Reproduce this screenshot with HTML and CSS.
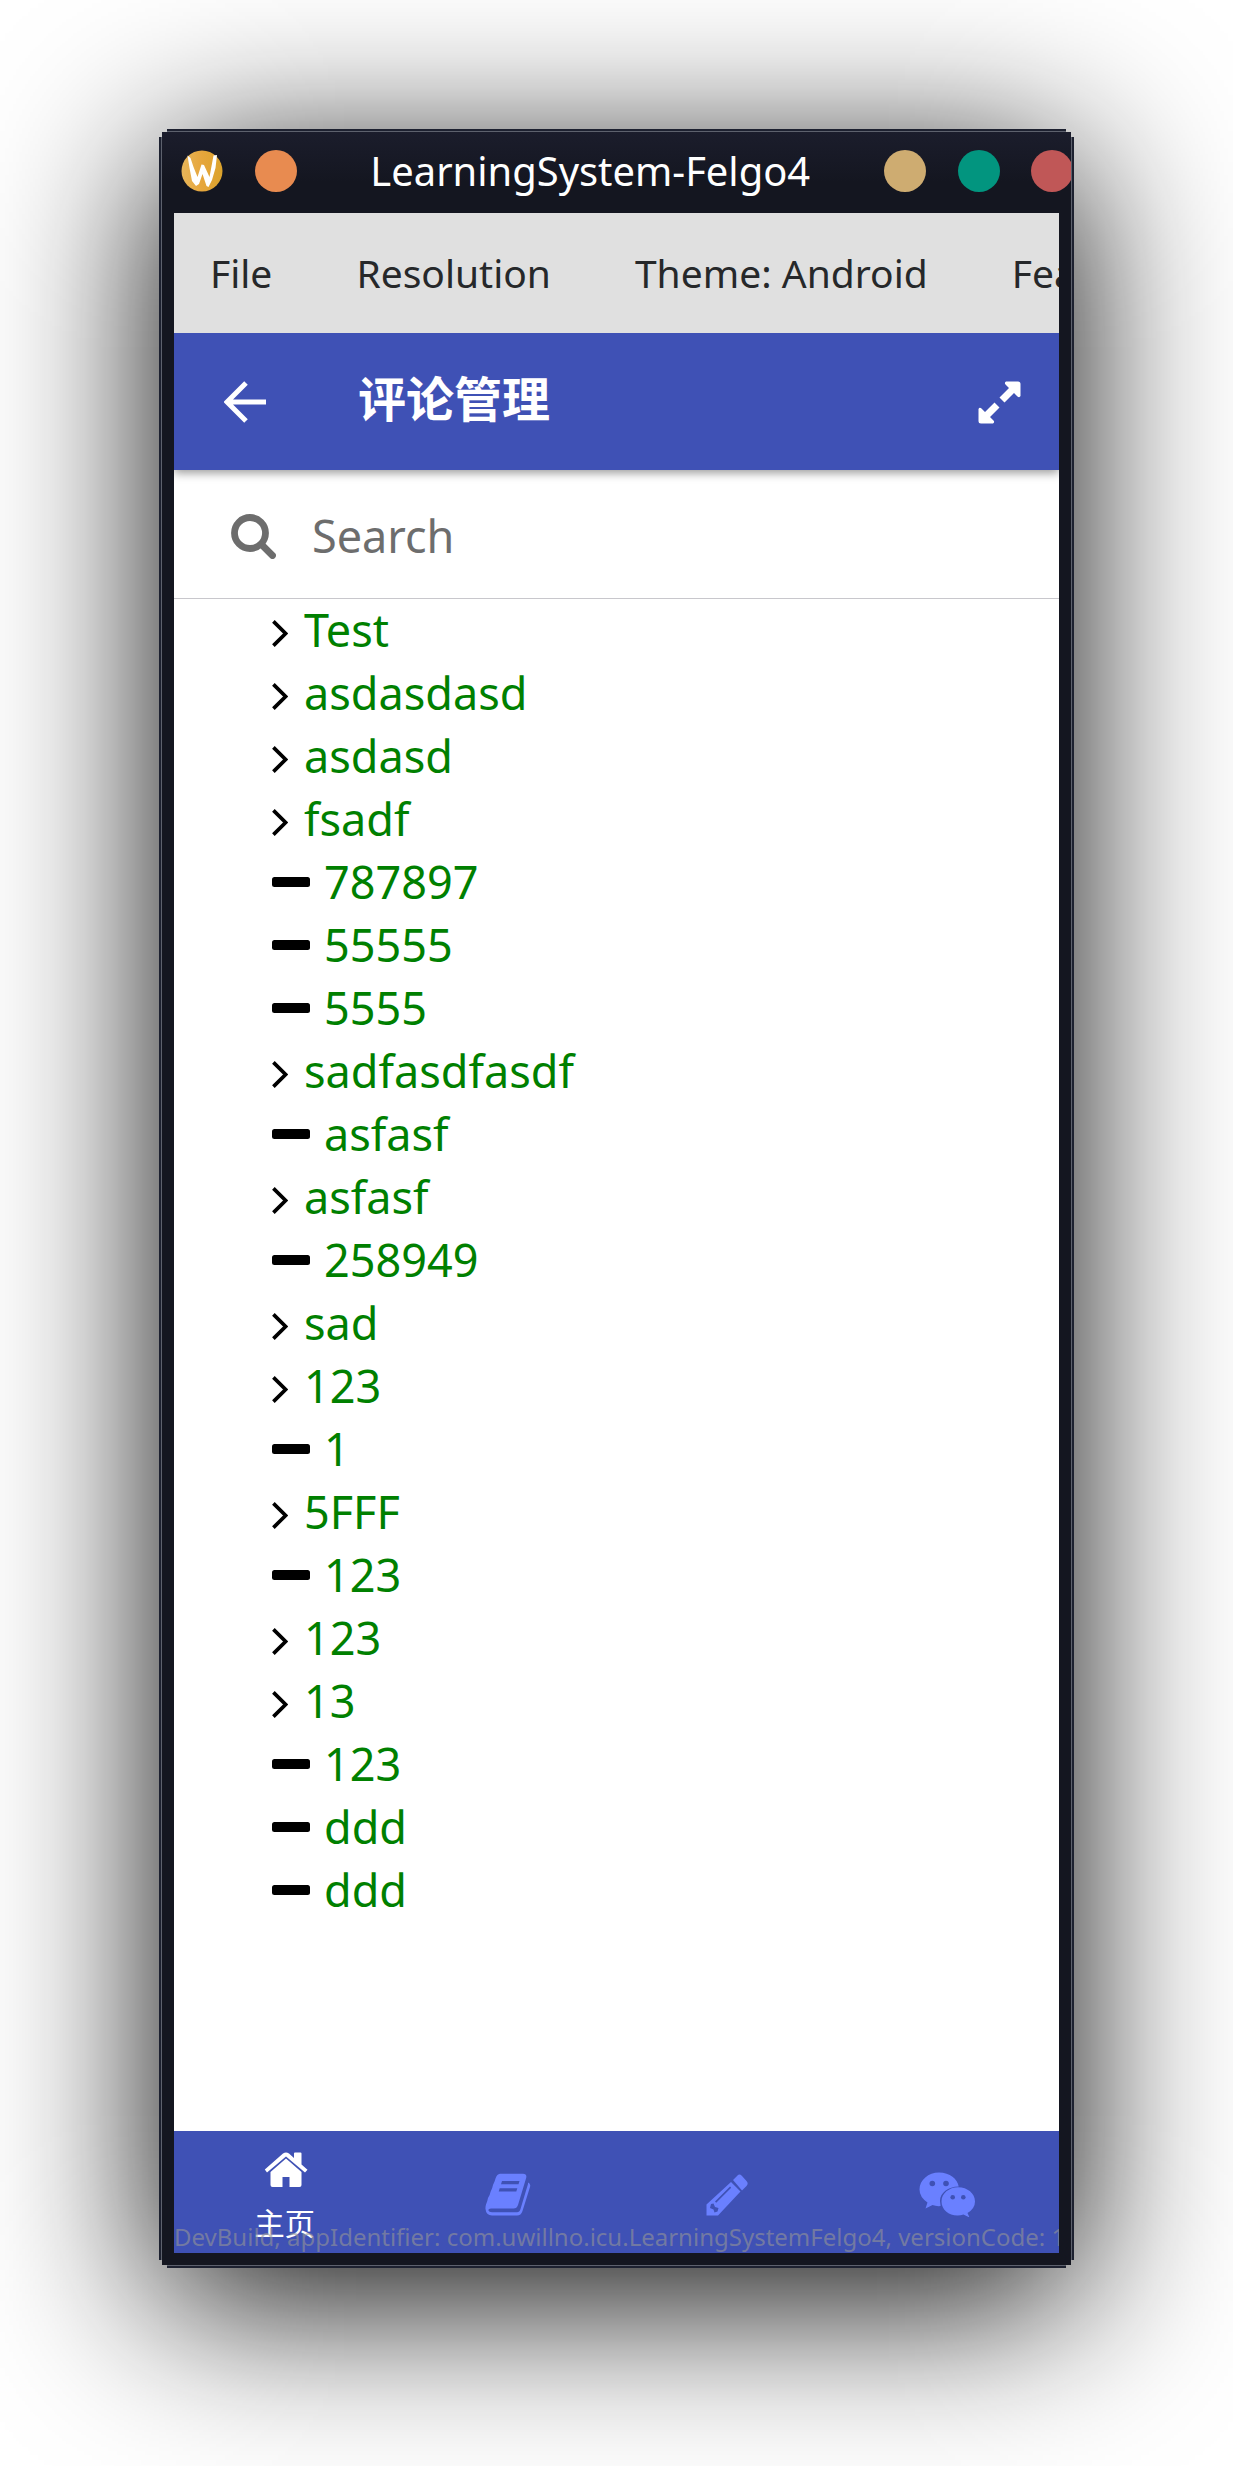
FILE: index.html
```html
<!DOCTYPE html>
<html lang="zh-CN">
<head>
<meta charset="utf-8">
<title>LearningSystem-Felgo4</title>
<link rel="stylesheet" href="styles.css">
</head>
<body>
<svg class="defs" width="0" height="0" aria-hidden="true">
  <symbol id="chev" viewBox="0 0 16 27"><path d="M1.4 1.4 L13.6 13.5 L1.4 25.6" fill="none" stroke="#000" stroke-width="3.7"/></symbol>
  <symbol id="dash" viewBox="0 0 38 10"><rect width="38" height="10" rx="2.5"/></symbol>
</svg>
<main class="window">
  <header class="titlebar">
    <div class="side">
      <svg class="logo" viewBox="0 0 42 42"><defs><linearGradient id="lg"><stop offset="0" stop-color="#e8b65a"/><stop offset=".5" stop-color="#e6a63c"/><stop offset="1" stop-color="#dba32c"/></linearGradient></defs><circle cx="21" cy="21" r="20.5" fill="url(#lg)"/><path d="M6.500 5.500 L9.500 8 L12.500 17 L16.500 27 L20.500 14.500 L23 15 L28.500 27 L32.500 5.500 L36 5 L34.500 18 L31 30 L27.500 37 L25.500 36 L21.500 24 L18 34 L15 36 L11 31 L8.500 18 Z" fill="#fff"/></svg>
      <span class="dot orange"></span>
    </div>
    <h1 class="title">LearningSystem-Felgo4</h1>
    <div class="controls"><span class="dot sand"></span><span class="dot teal"></span><span class="dot red"></span></div>
  </header>
  <section class="screen">
    <nav class="menubar"><span>File</span><span>Resolution</span><span>Theme: Android</span><span>Features</span></nav>
    <header class="appbar">
      <svg class="back" viewBox="0 0 42 42"><path d="M22 2 L3 21 L22 40 M3 21 H42" fill="none" stroke="#fff" stroke-width="5"/></svg>
      <h2>评论管理</h2>
      <svg class="expand" viewBox="0 0 43 43"><path d="M28 0.500 H40 Q42.500 .5 42.500 3 V15 Q41.500 17 39.500 15.500 L36 12 L26.500 21.500 L21.500 16.500 L31 7 L27.500 3.500 Q26 1.500 28 .5 Z M15 42.500 H3 Q.5 42.500 .5 40 V28 Q1.500 26 3.500 27.500 L7 31 L16.500 21.500 L21.500 26.500 L12 36 L15.500 39.500 Q17 41.500 15 42.500 Z" fill="#fff"/></svg>
    </header>
    <div class="search">
      <svg viewBox="0 0 45 45"><circle cx="19" cy="19" r="15.500" fill="none" stroke="#6d6d6d" stroke-width="6.800"/><path d="M30.500 30.500 L41.500 41.500" stroke="#6d6d6d" stroke-width="6.800" stroke-linecap="round"/></svg>
      <span>Search</span>
    </div>
    <ul class="tree">
      <li><svg class="c"><use href="#chev"/></svg><span>Test</span></li>
      <li><svg class="c"><use href="#chev"/></svg><span>asdasdasd</span></li>
      <li><svg class="c"><use href="#chev"/></svg><span>asdasd</span></li>
      <li><svg class="c"><use href="#chev"/></svg><span>fsadf</span></li>
      <li><svg class="d"><use href="#dash"/></svg><span>787897</span></li>
      <li><svg class="d"><use href="#dash"/></svg><span>55555</span></li>
      <li><svg class="d"><use href="#dash"/></svg><span>5555</span></li>
      <li><svg class="c"><use href="#chev"/></svg><span>sadfasdfasdf</span></li>
      <li><svg class="d"><use href="#dash"/></svg><span>asfasf</span></li>
      <li><svg class="c"><use href="#chev"/></svg><span>asfasf</span></li>
      <li><svg class="d"><use href="#dash"/></svg><span>258949</span></li>
      <li><svg class="c"><use href="#chev"/></svg><span>sad</span></li>
      <li><svg class="c"><use href="#chev"/></svg><span>123</span></li>
      <li><svg class="d"><use href="#dash"/></svg><span>1</span></li>
      <li><svg class="c"><use href="#chev"/></svg><span>5FFF</span></li>
      <li><svg class="d"><use href="#dash"/></svg><span>123</span></li>
      <li><svg class="c"><use href="#chev"/></svg><span>123</span></li>
      <li><svg class="c"><use href="#chev"/></svg><span>13</span></li>
      <li><svg class="d"><use href="#dash"/></svg><span>123</span></li>
      <li><svg class="d"><use href="#dash"/></svg><span>ddd</span></li>
      <li><svg class="d"><use href="#dash"/></svg><span>ddd</span></li>
    </ul>
    <footer class="tabs">
      <div class="tab active">
        <svg class="home" viewBox="0 0 44 36"><path d="M6.500 20 L22 6.500 L37.500 20 V33 Q37.500 35 35.500 35 H25.500 V25 H18.500 V35 H8.500 Q6.500 35 6.500 33 Z"/><path d="M.8 17.500 L19 1.600 Q22 -.6 25 1.600 L30 6 V1.500 Q30 .5 31 .5 H36.500 Q37.500 .5 37.500 1.500 V12.500 L43.500 17.800 L41 20.500 L22 4.500 L3 20.500 Z"/></svg>
        <span>主页</span>
      </div>
      <div class="tab"><svg class="book" viewBox="0 0 46 43"><path fill-rule="evenodd" d="M15 .7 H38 Q42.500 1 41 5.500 L33 32 Q31.800 35.500 28.500 35.500 H6 Q3.200 35.500 3.300 37.300 Q4 39.300 7 39.300 H32 Q34.500 39.300 35.500 36 L43 11 V9.500 Q46 11 45 14 L37.500 38 Q36 42.500 32 42.500 H7 Q1 42 .5 36 Q.3 33.500 1 31.500 Q2.500 28 3 25 Q5 22 5.500 19 Q7.500 15 8 12 Q10 8 10.500 5.500 Q12 1 15 .7 Z M17 8 L16 11.200 H33.500 L34.500 8 Z M14.700 15.200 L13.700 18.400 H31.300 L32.300 15.200 Z"/></svg></div>
      <div class="tab"><svg class="pencil" viewBox="0 0 42 42"><path fill-rule="evenodd" d="M25 8 L34.500 17.500 L12 41.500 H.5 V30.500 Z M9 27.500 L10.200 28.700 L25.200 13.700 L24 12.500 Z M5 30 L4 34 L7.500 35.500 L8.500 38.500 L11.500 37.500 L12.500 34 L9 33 L7.500 29.500 Z"/><path d="M27 6 L31.500 1.500 Q33.500 -.5 36 2 L40.500 7 Q42.800 9.500 40.500 12 L36 16.500 Z"/></svg></div>
      <div class="tab"><svg class="wechat" viewBox="0 0 56 45"><path d="M20 .5 C31 .5 38.500 7 39.700 14.500 C29 14.500 21 21 21 29 L21.600 34 Q17.500 34.500 13.500 33 L6.500 36.500 L8.500 30.500 Q.5 25 .5 17.500 C.5 8 9.500 .5 20 .5 Z M56 29.500 Q56 36.500 48.500 41 L50.500 45.500 L44.500 42.500 Q41.500 43.500 38.500 43.500 C29.500 43.500 22.500 37.500 22.500 29.500 S30 15.300 39.200 15.300 S56 21.500 56 29.500 Z"/><g fill="#3f51b5"><circle cx="13.300" cy="11.500" r="2.800"/><circle cx="27" cy="11.500" r="2.800"/><circle cx="33.700" cy="25.200" r="2.300"/><circle cx="44.300" cy="25.200" r="2.300"/></g></svg></div>
      <div class="build">DevBuild, appIdentifier: com.uwillno.icu.LearningSystemFelgo4, versionCode: 1</div>
    </footer>
  </section>
</main>
</body>
</html>
```
FILE: styles.css
```css
* { box-sizing: border-box; }
body {
  margin: 0;
  height: 2466px;
  padding: 129px 159px 0;
  overflow: hidden;
  background: #fff;
  font-family: "Noto Sans", "Noto Sans CJK SC", sans-serif;
}
.defs { position: absolute; }
h1, h2, ul { margin: 0; padding: 0; font-weight: 400; }
.window {
  position: relative;
  width: 915px;
  height: 2139px;
  padding: 2px;
  /* body of the frame, its light outline, then the notched outer edges */
  background:
    linear-gradient(#1b1d2c, #141620 50px, #141620) 3px 3px / 909px 2133px no-repeat,
    linear-gradient(#5d616d, #5d616d) 2px 8px / 911px 2123px no-repeat,
    linear-gradient(#5d616d, #5d616d) 8px 2px / 899px 2135px no-repeat,
    linear-gradient(#1d2130, #1d2130) 0 8px / 915px 2123px no-repeat,
    linear-gradient(#1d2130, #1d2130) 8px 0 / 899px 2139px no-repeat;
}
/* drop shadow, kept behind the frame so that it shows in the corner notches */
.window::before {
  content: "";
  position: absolute;
  z-index: -1;
  inset: 8px;
  box-shadow: 0 33px 162px 8px rgba(0, 0, 0, .96);
}
.titlebar {
  display: flex;
  align-items: center;
  height: 82px;
  padding: 0 1px 2px 20px;
  overflow: hidden;
}
.side { display: flex; align-items: center; gap: 31.500px; }
.logo { width: 42px; height: 42px; }
.dot { flex: none; width: 42px; height: 42px; border-radius: 50%; }
.orange { background: #e88b50; }
.sand { background: #ceac71; }
.teal { background: #02957f; }
.red { background: #c05757; }
.title { flex: 1; color: #fff; font-size: 39.900px; line-height: 52px; text-align: center; white-space: nowrap; }
.controls { display: flex; gap: 31.500px; width: 187px; overflow: hidden; }
.screen {
  display: flex;
  flex-direction: column;
  width: 885px;
  height: 2040px;
  margin-left: 13px;
  background: #fff;
}
.menubar {
  display: flex;
  align-items: center;
  gap: 84px;
  height: 120px;
  padding: 0 0 2px 36px;
  overflow: hidden;
  background: #e0e0e0;
  color: #26282a;
  font-size: 39px;
  white-space: nowrap;
}
.appbar {
  display: flex;
  align-items: center;
  height: 137px;
  padding: 0 38px 0 50px;
  background: #3f51b5;
  box-shadow: 0 3px 9px rgba(0, 0, 0, .4);
  clip-path: inset(0 0 -14px 0);
}
.appbar h2 { flex: 1; margin: 0 0 5px 92px; color: #fff; font-size: 48px; font-weight: 700; line-height: 70px; }
.back { width: 42px; height: 42px; }
.expand { width: 43px; height: 43px; margin-top: 2px; }
.search {
  display: flex;
  align-items: center;
  gap: 36px;
  height: 129px;
  padding: 2px 0 0 57px;
  border-bottom: 1px solid #c8c7cc;
  color: #6d6d6d;
  font-size: 45px;
}
.search svg { width: 45px; height: 45px; margin-top: 3px; }
.tree { flex: 1; padding-left: 97px; list-style: none; }
.tree li { display: flex; align-items: center; height: 63px; color: #008000; font-size: 45px; line-height: 61px; }
.tree span { margin-bottom: 2px; }
.c { width: 16px; height: 27px; margin: 5px 16px 0 1px; }
.d { width: 38px; height: 10px; margin: 0 14px 1px 1px; }
.tabs { display: grid; grid-template-columns: repeat(4, 1fr); position: relative; height: 122px; background: #3f51b5; }
.tab { display: flex; flex-direction: column; align-items: center; padding-top: 42px; fill: #6a80ff; }
.active { padding-top: 21px; fill: #fff; color: #fff; font-size: 30.500px; line-height: 44px; }
.active .home { margin-left: 3px; }
.active span { margin-top: 13px; }
.home { width: 44px; height: 36px; }
.book { width: 46px; height: 43px; margin-left: 4px; }
.pencil { width: 42px; height: 42px; margin-top: 1px; }
.wechat { width: 56px; height: 45px; margin: -1px 2px 0 0; }
.build {
  position: absolute;
  left: 0;
  right: 0;
  bottom: 0;
  overflow: hidden;
  color: rgba(150, 150, 150, .6);
  font-size: 24px;
  line-height: 33px;
  white-space: nowrap;
}
```
